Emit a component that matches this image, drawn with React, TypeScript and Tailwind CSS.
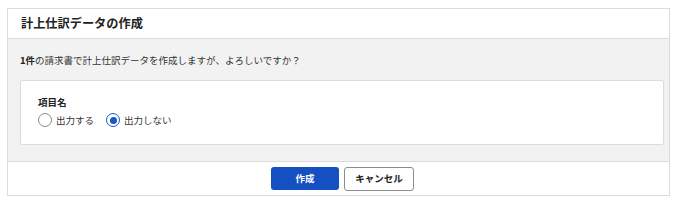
import React from "react";

function Radio({ checked, label }: { checked: boolean; label: string }) {
  return (
    <label className="flex items-center gap-[4px]">
      <span
        className={
          checked
            ? "flex h-[14px] w-[14px] items-center justify-center rounded-full border-[1.5px] border-[#1a56c8] bg-white"
            : "flex h-[14px] w-[14px] items-center justify-center rounded-full border border-[#8a8a8a] bg-white"
        }
      >
        {checked && <span className="h-[7px] w-[7px] rounded-full bg-[#1a56c8]" />}
      </span>
      <span className="text-[9.5px] text-[#333]">{label}</span>
    </label>
  );
}

export default function App() {
  return (
    <div
      className="h-[201px] w-[676px] bg-white pl-[7px] pt-[8px]"
      style={{ fontFamily: '"Noto Sans CJK JP", "Noto Sans", sans-serif' }}
    >
      <div className="flex h-[188px] w-[663px] flex-col border border-[#dcdcdc] bg-white">
        <div className="flex h-[30px] items-center border-b border-[#dcdcdc] pl-[13px]">
          <span className="text-[12.2px] font-bold text-[#222]">計上仕訳データの作成</span>
        </div>
        <div className="flex flex-1 flex-col bg-[#f2f2f2] pl-[12px] pr-[5px]">
          <div className="flex h-[41px] items-center pt-[2px] text-[9.5px] text-[#333]">
            <span className="font-bold text-[#222]">1件</span>
            <span>の請求書で計上仕訳データを作成しますが、よろしいですか？</span>
          </div>
          <div className="flex h-[65px] flex-col rounded-[2px] border border-[#dcdcdc] bg-white pl-[17px] pt-[14px]">
            <div className="text-[9.5px] font-bold leading-[14px] text-[#222]">項目名</div>
            <div className="mt-[4px] flex items-center gap-[12px]">
              <Radio checked={false} label="出力する" />
              <Radio checked={true} label="出力しない" />
            </div>
          </div>
        </div>
        <div className="flex h-[34px] items-center justify-center gap-[5px] border-t border-[#dcdcdc] bg-white pl-[8px]">
          <button className="flex h-[23px] w-[68px] items-center justify-center rounded-[3px] bg-[#1450c2] text-[9.5px] font-bold text-white">
            作成
          </button>
          <button className="flex h-[24px] w-[70px] items-center justify-center rounded-[3px] border border-[#8c8c8c] bg-white text-[9.5px] font-bold text-[#222]">
            キャンセル
          </button>
        </div>
      </div>
    </div>
  );
}
